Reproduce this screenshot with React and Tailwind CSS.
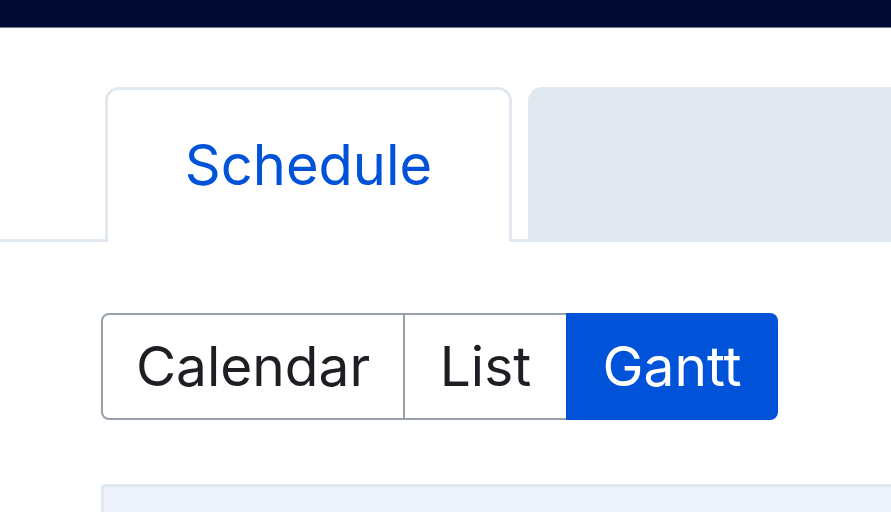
// App.jsx
// Zoomed-in schedule view: top bar, tab strip and a Calendar / List / Gantt switch.

import React, { useState } from 'react';

const views = [
  { key: 'calendar', label: 'Calendar', box: 'w-[304px] border-2 rounded-l-[8px]' },
  { key: 'list', label: 'List', box: 'w-[161px] border-y-2' },
  { key: 'gantt', label: 'Gantt', box: 'w-[212px] rounded-r-[8px]' },
];

const App = () => {
  // Selected view in the segmented switch
  const [view, setView] = useState('gantt');

  return (
    <div className="w-[891px] h-[512px] overflow-hidden bg-white flex flex-col font-['Inter','Liberation_Sans',sans-serif]">
      {/* Top bar */}
      <div className="h-[28px] shrink-0 bg-[#000a33] border-b border-[#737891]" />

      {/* Tab strip */}
      <div className="mt-[59px] h-[155px] shrink-0 flex gap-[16px] pl-[105px] border-b-[3px] border-[#e2e8f0]">
        <div className="w-[407px] -mb-[3px] flex items-center justify-center rounded-t-[14px] border-[3px] border-b-0 border-[#e2e8f0] bg-white">
          <span className="text-[56px] leading-none text-[#0052d9] -mt-[3px]">Schedule</span>
        </div>
        <div className="flex-1 -mb-[3px] rounded-tl-[14px] bg-[#e2e8f0]" />
      </div>

      {/* View switch */}
      <div className="ml-[101px] mt-[71px] flex h-[107px] shrink-0">
        {views.map((v) => {
          const active = view === v.key;
          return (
            <button
              key={v.key}
              onClick={() => setView(v.key)}
              className={
                'h-full flex items-center justify-center text-[55px] leading-none border-[#979fab] ' +
                v.box +
                (active ? ' bg-[#0052d9] text-white' : ' bg-white text-[#1e1f24]')
              }
            >
              {v.label}
            </button>
          );
        })}
      </div>

      {/* Content panel */}
      <div className="ml-[101px] mt-[64px] flex-1 rounded-tl-[4px] border-t-[3px] border-l-[3px] border-[#e2e8f0] bg-[#eef2fa]" />
    </div>
  );
};

export default App;
